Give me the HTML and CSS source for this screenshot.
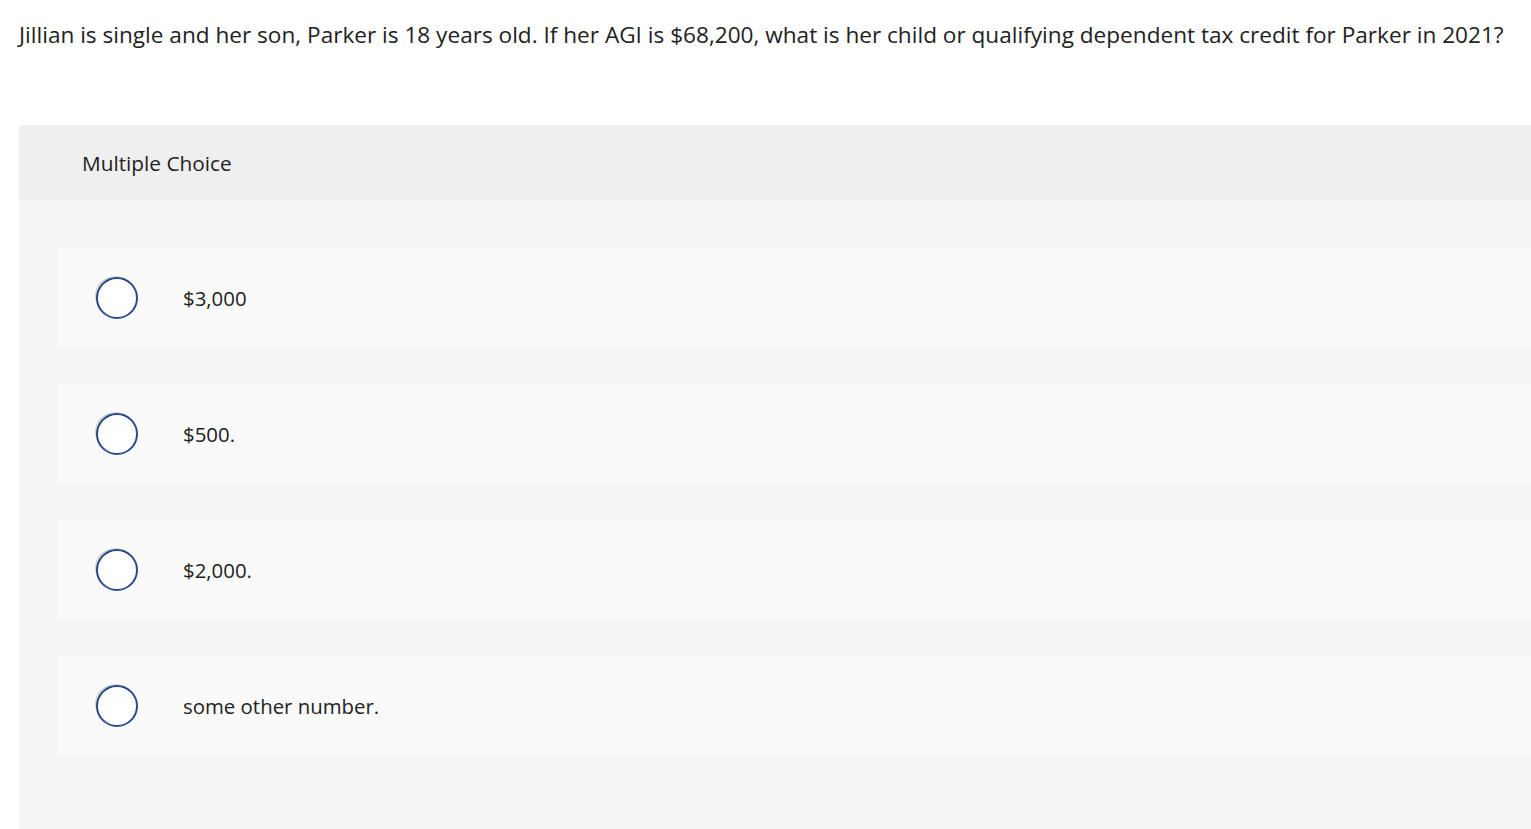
FILE: index.html
```html
<!DOCTYPE html>
<html>
<head>
<meta charset="utf-8">
<link rel="stylesheet" href="styles.css">
</head>
<body>
<div class="page">
  <p class="question">Jillian is single and her son, Parker is 18 years old. If her AGI is $68,200, what is her child or qualifying dependent tax credit for Parker in 2021?</p>
  <section class="panel">
    <div class="panel-head">Multiple Choice</div>
    <div class="panel-body">
      <label class="option"><span class="radio"></span><span class="label">$3,000</span></label>
      <label class="option"><span class="radio"></span><span class="label">$500.</span></label>
      <label class="option"><span class="radio"></span><span class="label">$2,000.</span></label>
      <label class="option"><span class="radio"></span><span class="label">some other number.</span></label>
    </div>
  </section>
</div>
</body>
</html>
```
FILE: styles.css
```css
html, body {
  margin: 0;
  padding: 0;
  background: #ffffff;
  overflow: hidden;
}
body {
  font-family: "Open Sans", "Liberation Sans", sans-serif;
  color: #222222;
}
.page {
  padding: 20px 0 0 19px;
}
.question {
  margin: 0;
  font-size: 22.6px;
  line-height: 30px;
  white-space: nowrap;
  color: #222;
}
.panel {
  margin-top: 75px;
  width: 1530px;
  border-top-left-radius: 4px;
  overflow: hidden;
}
.panel-head {
  background: #efefef;
  height: 75px;
  display: flex;
  align-items: center;
  padding-left: 63px;
  font-size: 20.8px;
  color: #222;
}
.panel-body {
  background: #f5f5f5;
  padding: 48px 0 80px 39px;
  display: flex;
  flex-direction: column;
  gap: 36px;
}
.option {
  background: #fafafa;
  height: 100px;
  border-radius: 4px 0 0 4px;
  display: flex;
  align-items: center;
  padding-left: 38px;
}
.radio {
  width: 38px;
  height: 38px;
  border: 2px solid #2b4a8c;
  border-radius: 50%;
  background: #fff;
  box-shadow: -2px -2px 0 -1px #d4d4d4;
  flex: none;
}
.label {
  margin-left: 45px;
  font-size: 20.4px;
  color: #222;
}
```
